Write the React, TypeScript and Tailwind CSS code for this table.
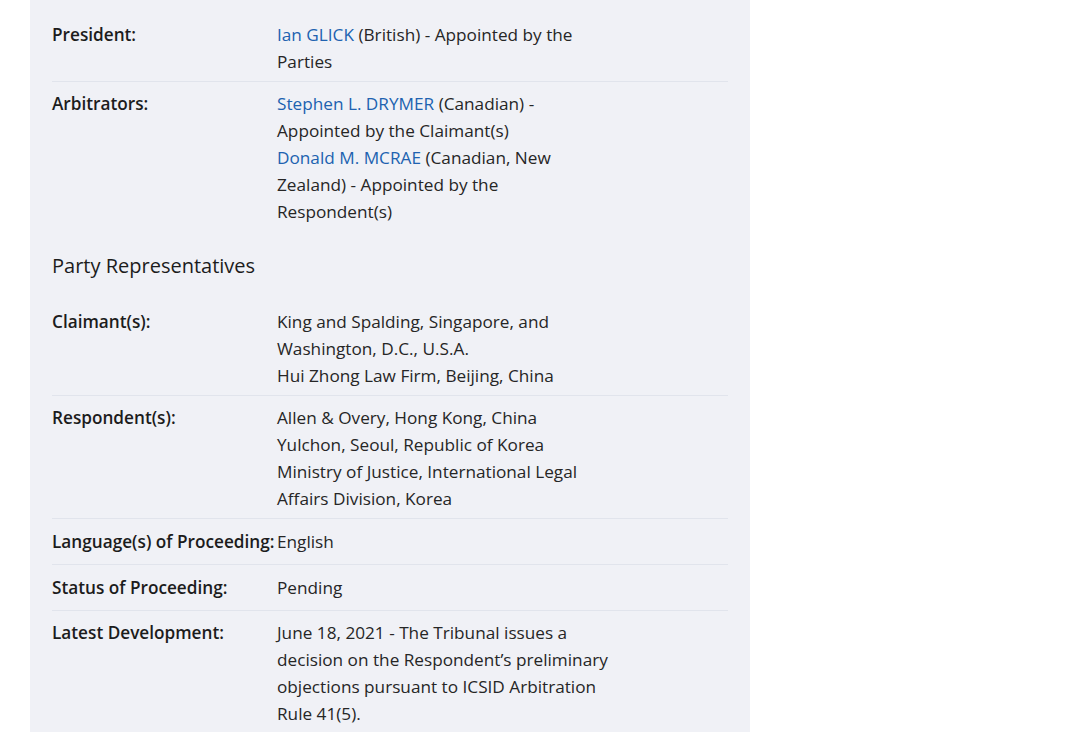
import React from "react";

type Part = { text: string; link?: boolean };

interface Row {
  label: string;
  lines: Part[][];
}

const tribunal: Row[] = [
  {
    label: "President:",
    lines: [[{ text: "Ian GLICK", link: true }, { text: " (British) - Appointed by the Parties" }]],
  },
  {
    label: "Arbitrators:",
    lines: [
      [{ text: "Stephen L. DRYMER", link: true }, { text: " (Canadian) - Appointed by the Claimant(s)" }],
      [{ text: "Donald M. MCRAE", link: true }, { text: " (Canadian, New Zealand) - Appointed by the Respondent(s)" }],
    ],
  },
];

const parties: Row[] = [
  {
    label: "Claimant(s):",
    lines: [
      [{ text: "King and Spalding, Singapore, and Washington, D.C., U.S.A." }],
      [{ text: "Hui Zhong Law Firm, Beijing, China" }],
    ],
  },
  {
    label: "Respondent(s):",
    lines: [
      [{ text: "Allen & Overy, Hong Kong, China" }],
      [{ text: "Yulchon, Seoul, Republic of Korea" }],
      [{ text: "Ministry of Justice, International Legal Affairs Division, Korea" }],
    ],
  },
  {
    label: "Language(s) of Proceeding:",
    lines: [[{ text: "English" }]],
  },
  {
    label: "Status of Proceeding:",
    lines: [[{ text: "Pending" }]],
  },
  {
    label: "Latest Development:",
    lines: [
      [
        {
          text: "June 18, 2021 - The Tribunal issues a decision on the Respondent\u2019s preliminary objections pursuant to ICSID Arbitration Rule 41(5).",
        },
      ],
    ],
  },
];

function InfoRow({ row, last }: { row: Row; last?: boolean }) {
  const single = row.lines.length === 1 && row.lines[0].length === 1 && row.lines[0][0].text.length < 20;
  return (
    <div
      className={`flex items-start ${single ? "py-[9px]" : "pt-[8px] pb-[6px]"} ${
        last ? "" : "border-b border-[#e1e4ec]"
      }`}
    >
      <div className="w-[225px] shrink-0 font-semibold text-[#1c1c1c]">{row.label}</div>
      <div className="w-[334px] text-[#262626]">
        {row.lines.map((line, i) => (
          <div key={i}>
            {line.map((p, j) =>
              p.link ? (
                <a key={j} href="#" className="text-[#2062b0]">
                  {p.text}
                </a>
              ) : (
                <span key={j}>{p.text}</span>
              )
            )}
          </div>
        ))}
      </div>
    </div>
  );
}

export default function App() {
  return (
    <div className="min-h-screen bg-white font-['Open_Sans',sans-serif] text-[17.2px] leading-[27px]">
      <div className="ml-[30px] w-[720px] bg-[#f0f1f6] pl-[22px] pr-[22px] pt-[13px] pb-[20px]">
        {tribunal.map((r, i) => (
          <InfoRow key={r.label} row={r} last={i === tribunal.length - 1} />
        ))}
        <h2 className="mt-[20px] mb-[19px] text-[20px] leading-[30px] font-medium text-[#1c1c1c]">
          Party Representatives
        </h2>
        {parties.map((r, i) => (
          <InfoRow key={r.label} row={r} last={i === parties.length - 1} />
        ))}
      </div>
    </div>
  );
}
